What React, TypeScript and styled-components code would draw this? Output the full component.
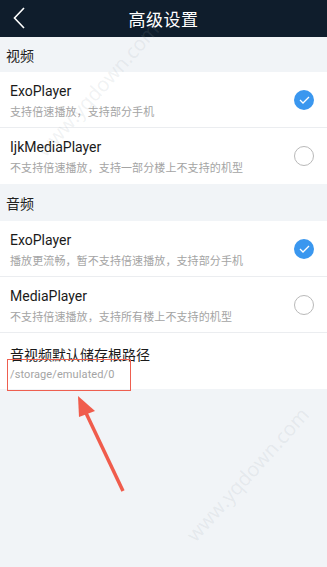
import styled, { createGlobalStyle } from "styled-components";

const GlobalStyle = createGlobalStyle`
  html, body {
    margin: 0;
    padding: 0;
    background: #f1f4f7;
  }
  body {
    font-family: "Roboto", "Noto Sans CJK SC", sans-serif;
  }
`;

const Screen = styled.div`
  position: relative;
  width: 327px;
  height: 567px;
  overflow: hidden;
  background: #f1f4f7;
`;

const Header = styled.div`
  position: relative;
  height: 37px;
  background: #0f1d2c;
  display: flex;
  align-items: center;
  justify-content: center;
`;

const BackButton = styled.div`
  position: absolute;
  left: 13px;
  top: 6px;
  width: 16px;
  height: 24px;
  display: flex;
  align-items: center;
`;

const Title = styled.div`
  color: #ffffff;
  font-size: 17px;
  letter-spacing: 0.5px;
`;

const SectionLabel = styled.div<{ $h: number }>`
  height: ${(p) => p.$h}px;
  display: flex;
  align-items: center;
  padding-left: 6px;
  font-size: 14px;
  color: #222;
  background: #f1f4f7;
`;

const Group = styled.div`
  background: #ffffff;
`;

const Row = styled.div<{ $last?: boolean }>`
  height: 56px;
  display: flex;
  align-items: center;
  padding: 0 10px;
  border-bottom: ${(p) => (p.$last ? "none" : "1px solid #ebedf0")};
  box-sizing: border-box;
`;

const RowText = styled.div`
  flex: 1;
  display: flex;
  flex-direction: column;
  gap: 4px;
  padding-top: 2px;
`;

const RowTitle = styled.div`
  font-size: 14px;
  color: #1a1a1a;
`;

const RowSub = styled.div`
  font-size: 11px;
  letter-spacing: 0.1px;
  color: #a4a4a4;
`;

const Radio = styled.div<{ $on?: boolean }>`
  width: 20px;
  height: 20px;
  border-radius: 50%;
  box-sizing: border-box;
  margin-right: 3px;
  display: flex;
  align-items: center;
  justify-content: center;
  background: ${(p) => (p.$on ? "#3a97ef" : "#fff")};
  border: ${(p) => (p.$on ? "none" : "1px solid #b9b9b9")};
`;

const PathRow = styled(Row)`
  position: relative;
`;

const Highlight = styled.div`
  position: absolute;
  left: 7px;
  top: 26px;
  width: 124px;
  height: 32px;
  border: 1.5px solid #ee5f50;
  box-sizing: border-box;
`;

const Arrow = styled.svg`
  position: absolute;
  left: 0;
  top: 0;
  pointer-events: none;
`;

const Watermark = styled.div<{ $x: number; $y: number }>`
  position: absolute;
  left: ${(p) => p.$x}px;
  top: ${(p) => p.$y}px;
  transform: rotate(-48deg);
  transform-origin: left bottom;
  font-size: 20px;
  color: rgba(150, 160, 170, 0.15);
  font-family: "Open Sans", sans-serif;
  pointer-events: none;
  white-space: nowrap;
`;

const items = [
  { section: "视频", rows: [
    { t: "ExoPlayer", s: "支持倍速播放，支持部分手机", on: true },
    { t: "IjkMediaPlayer", s: "不支持倍速播放，支持一部分楼上不支持的机型", on: false },
  ] },
  { section: "音频", rows: [
    { t: "ExoPlayer", s: "播放更流畅，暂不支持倍速播放，支持部分手机", on: true },
    { t: "MediaPlayer", s: "不支持倍速播放，支持所有楼上不支持的机型", on: false },
  ] },
];

function Check() {
  return (
    <svg width="11" height="8" viewBox="0 0 11 8">
      <path d="M1 4 L4 7 L10 1" fill="none" stroke="#fff" strokeWidth="1.3" />
    </svg>
  );
}

export default function App() {
  return (
    <Screen>
      <GlobalStyle />
      <Header>
        <BackButton>
          <svg width="12" height="22" viewBox="0 0 12 22">
            <path d="M11 1 L1.5 11 L11 21" fill="none" stroke="#fff" strokeWidth="1.6" />
          </svg>
        </BackButton>
        <Title>高级设置</Title>
      </Header>
      {items.map((g, gi) => (
        <div key={gi}>
          <SectionLabel $h={gi === 0 ? 35 : 37}>{g.section}</SectionLabel>
          <Group>
            {g.rows.map((r, ri) => (
              <Row key={ri} $last={gi === 0 && ri === 1}>
                <RowText>
                  <RowTitle>{r.t}</RowTitle>
                  <RowSub>{r.s}</RowSub>
                </RowText>
                <Radio $on={r.on}>{r.on && <Check />}</Radio>
              </Row>
            ))}
            {gi === 1 && (
              <PathRow $last>
                <RowText>
                  <RowTitle>音视频默认储存根路径</RowTitle>
                  <RowSub>/storage/emulated/0</RowSub>
                </RowText>
                <Highlight />
              </PathRow>
            )}
          </Group>
        </div>
      ))}
      <Arrow width="327" height="567" viewBox="0 0 327 567">
        <line x1="123" y1="491" x2="86" y2="413" stroke="#f05c4c" strokeWidth="3.5" />
        <polygon points="78,396 95,411 79,417" fill="#f05c4c" />
      </Arrow>
      <Watermark $x={50} $y={135}>www.yqdown.com</Watermark>
      <Watermark $x={200} $y={520}>www.yqdown.com</Watermark>
    </Screen>
  );
}
